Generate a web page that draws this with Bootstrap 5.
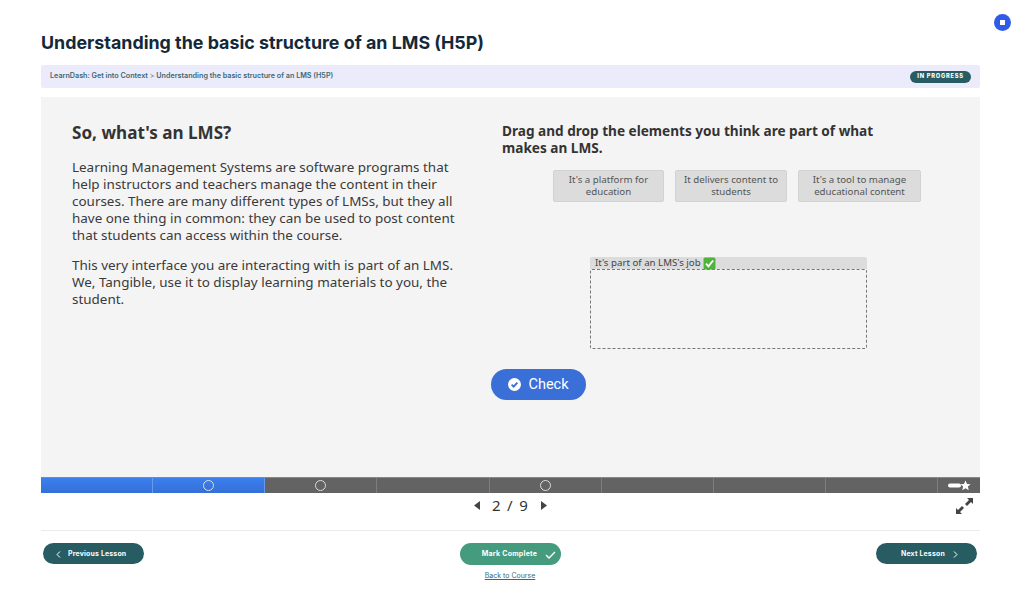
<!DOCTYPE html>
<html lang="en"><head><meta charset="utf-8"><title>LMS</title>
<link href="https://cdn.jsdelivr.net/npm/bootstrap@5.3.0/dist/css/bootstrap.min.css" rel="stylesheet">
<style>
html,body{height:592px;overflow:hidden;background:#fff}
body{font-family:Inter,"Liberation Sans",sans-serif;color:#333}
.wrap{width:939px;margin-left:41px;position:relative}
.dot{position:absolute;left:994px;top:14px;width:17px;height:17px;border-radius:50%;background:#2f5be8;display:flex;align-items:center;justify-content:center}
.dot i{display:block;width:5px;height:5px;background:#fff}
.ttl{font-size:17.85px;font-weight:700;line-height:23px;color:#13293a;margin:0;padding-top:31px;height:65px}
.crumb{height:23px;background:#ebebfc;border-radius:2px;padding:0 9px;margin-bottom:9px;font-size:7.2px;font-weight:600;color:#3b6a70}
.crumb span.sp{font-weight:400;color:#6b8a90}
.stat{background:#275c62;color:#fff;font-size:5.7px;font-weight:800;letter-spacing:.75px;border-radius:7px;height:12px;width:61px;display:flex;align-items:center;justify-content:center}
.pan{height:380px;background:#f4f4f4;font-family:"Noto Sans","Open Sans",sans-serif;color:#3a3a3a;position:relative}
.lft{width:461px;padding:25px 0 0 31px;flex:none}
.lft h2{font-size:17.1px;font-weight:700;line-height:21px;color:#333;margin:0 0 16px}
.lft p{font-size:13.45px;line-height:17.05px;margin:0 0 13px;width:395px}
.rgt{flex:1;padding-top:25px}
.rgt h3{font-size:13.6px;font-weight:700;line-height:17px;margin:0 0 14px;width:410px;color:#333}
.chips{display:flex;gap:11px;justify-content:flex-end;padding-right:59px;height:31px}
.chip{background:#dcdcdc;border:1px solid #d2d2d2;border-radius:2px;font-size:9.7px;line-height:12px;color:#555;display:flex;align-items:center;justify-content:center;text-align:center;height:32px}
.zone{margin:56px 0 0 88px;width:277px}
.zt{background:#dcdcdc;height:12px;font-size:9.7px;line-height:12px;padding-left:5px;color:#444;border-radius:2px 2px 0 0;white-space:nowrap;display:flex;align-items:center;gap:2px}
.zb{height:80px;border:1.4px dashed #777;border-radius:2px}
.chk{margin:20px 0 0 450px;width:95px;height:31px;background:#3a6fd8;color:#fff;border-radius:16px;font-family:Roboto,Inter,sans-serif;font-size:14.5px;gap:7px}
.skb{height:16px;display:flex;background:#636363;border-top:1px solid #888}
.seg{flex:1;border-right:1px solid #7d7d7d;display:flex;align-items:center;justify-content:center}
.seg.on{background:linear-gradient(#3a80ee,#356fd8);border-right-color:#6a98ea}
.seg.end{flex:none;width:42px;border:0;gap:0;padding-left:1px}
.rng{width:11px;height:11px;border-radius:50%;border:1.2px solid #ddd;display:block}
.pg{height:38px;position:relative;font-family:"Noto Sans",sans-serif;font-size:15px;color:#333;border-bottom:1px solid #e9ecef}
.pgn{padding-top:0;gap:12px;letter-spacing:1.3px;height:24px;align-items:center}
.fs{position:absolute;right:7px;top:5px}
.btm{height:60px;position:relative;padding:12px 3px 0 2px}
.pill{width:101px;height:21px;border-radius:11px;background:#275c62;color:#fff;font-size:6.9px;font-weight:700;letter-spacing:.2px;display:flex;align-items:center;gap:7px;flex:none;padding-top:1px}
.prev{padding-left:13px}
.nxt{padding-left:25px;gap:8px}
.mid{background:#459b7e;height:22px;justify-content:center;gap:8px;font-size:7px;letter-spacing:.25px;padding-left:2px}
.bk{font-size:7px;color:#3b6a70;text-decoration:underline;margin-top:6px;display:block}
</style></head><body>
<div class="dot"><i></i></div>
<div class="wrap">
<h1 class="ttl">Understanding the basic structure of an LMS (H5P)</h1>
<div class="crumb d-flex align-items-center justify-content-between">
<div>LearnDash: Get into Context <span class="sp">&gt;</span> Understanding the basic structure of an LMS (H5P)</div>
<div class="stat">IN PROGRESS</div></div>
<div class="pan">
<div class="d-flex">
<div class="lft"><h2>So, what's an LMS?</h2>
<p>Learning Management Systems are software programs that help instructors and teachers manage the content in their courses. There are many different types of LMSs, but they all have one thing in common: they can be used to post content that students can access within the course.</p>
<p>This very interface you are interacting with is part of an LMS. We, Tangible, use it to display learning materials to you, the student.</p></div>
<div class="rgt"><h3>Drag and drop the elements you think are part of what makes an LMS.</h3>
<div class="chips"><div class="chip" style="width:111px">It's a platform for<br>education</div><div class="chip" style="width:112px">It delivers content to<br>students</div><div class="chip" style="width:123px">It's a tool to manage<br>educational content</div></div>
<div class="zone"><div class="zt">It's part of an LMS's job <svg width="13" height="13" viewBox="0 0 12 12"><rect x=".5" y=".5" width="11" height="11" rx="1.5" fill="#4fb33c"/><path d="M2.8 6.2 5 8.6 9.3 3.2" fill="none" stroke="#fff" stroke-width="1.7"/></svg></div><div class="zb"></div></div>
</div></div>
<div class="chk d-flex align-items-center justify-content-center"><svg width="13" height="13" viewBox="0 0 13 13"><circle cx="6.5" cy="6.5" r="6.5" fill="#fff"/><path d="M3.6 6.7 5.6 8.7 9.4 4.6" fill="none" stroke="#3a6fd8" stroke-width="1.8"/></svg><span>Check</span></div>
</div>
<div class="skb">
<div class="seg on"></div><div class="seg on"><span class="rng"></span></div><div class="seg"><span class="rng"></span></div><div class="seg"></div><div class="seg"><span class="rng"></span></div><div class="seg"></div><div class="seg"></div><div class="seg"></div>
<div class="seg end"><svg width="25" height="11" viewBox="0 0 25 11"><rect x="1" y="3.5" width="13" height="4" rx="2" fill="#fff"/><path d="M18.5 .5 20 3.9 23.6 4.2 20.9 6.6 21.7 10.2 18.5 8.3 15.3 10.2 16.1 6.6 13.4 4.2 17 3.9Z" fill="#fff"/></svg></div>
</div>
<div class="pg">
<div class="pgn d-flex justify-content-center"><svg width="6" height="9" viewBox="0 0 6 9"><path d="M6 0V9L0 4.500Z" fill="#444"/></svg><span>2 / 9</span><svg width="6" height="9" viewBox="0 0 6 9"><path d="M0 0V9L6 4.500Z" fill="#444"/></svg></div>
<svg class="fs" width="17" height="16" viewBox="0 0 17 16"><path d="M11 0H17V6L15 4 11 8 9 6 13 2ZM0 10 2 12 6 8 8 10 4 14 6 16H0Z" fill="#444"/></svg>
</div>
<div class="btm d-flex justify-content-between align-items-start">
<div class="pill prev"><svg width="5" height="7" viewBox="0 0 5 7"><path d="M4 .5 1 3.500 4 6.500" fill="none" stroke="#fff" stroke-width="1"/></svg><span>Previous Lesson</span></div>
<div class="text-center"><div class="pill mid"><span class="ms-3">Mark Complete</span><svg width="11" height="8" viewBox="0 0 11 8"><path d="M1 4 4 7 10 1" fill="none" stroke="#fff" stroke-width="1.400"/></svg></div><a class="bk" href="#">Back to Course</a></div>
<div class="pill nxt"><span>Next Lesson</span><svg width="5" height="7" viewBox="0 0 5 7"><path d="M1 .5 4 3.500 1 6.500" fill="none" stroke="#fff" stroke-width="1"/></svg></div>
</div>
</div>
<script src="https://cdn.jsdelivr.net/npm/bootstrap@5.3.0/dist/js/bootstrap.bundle.min.js"></script>
</body></html>
